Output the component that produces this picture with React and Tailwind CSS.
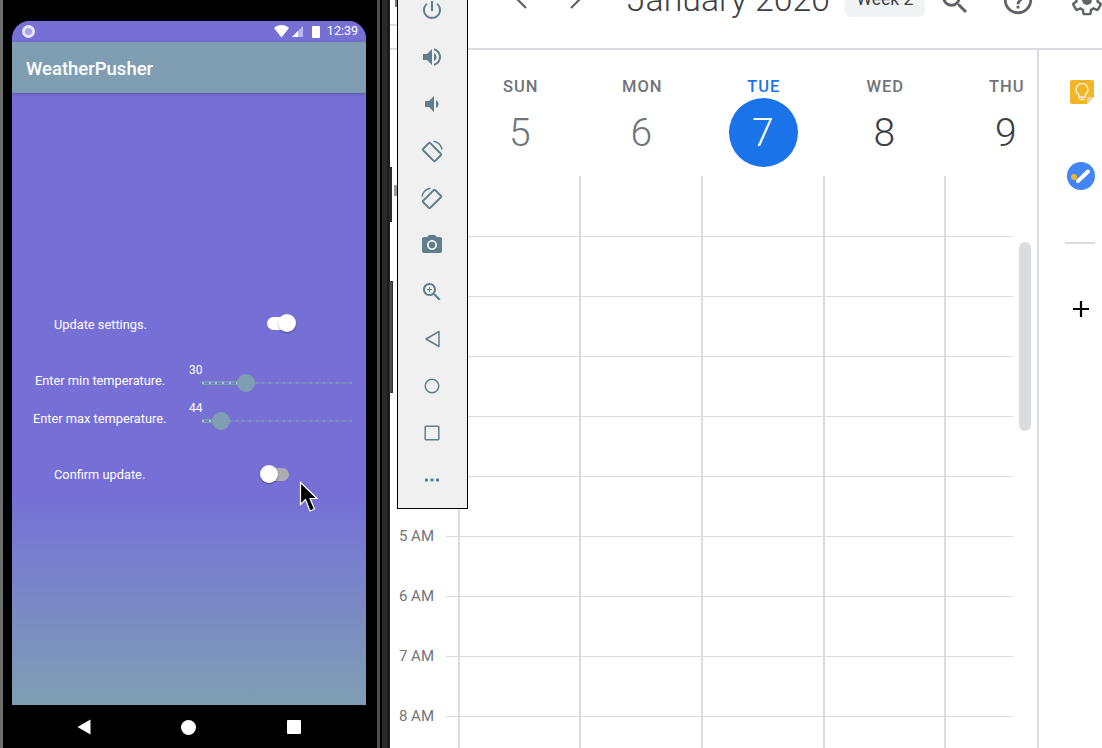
import React from "react";

const toolColor = "#607d8b";

const ToolIcon = ({ children, className = "" }) => (
  <div className="h-[47.1px] flex items-center justify-center shrink-0 pr-[1px]">
    <svg width="24" height="24" viewBox="0 0 24 24" fill={toolColor} className={className}>
      {children}
    </svg>
  </div>
);

const RotateShape = () => (
  <>
    <rect x="3.5" y="8" width="17" height="10" rx="1" transform="rotate(45 12 13)" fill="none" stroke={toolColor} strokeWidth="2" />
    <path d="M13.5 2.2A10.5 10.5 0 0 1 22 10.5" fill="none" stroke={toolColor} strokeWidth="1.5" />
  </>
);

const EmulatorToolbar = () => (
  <div className="absolute left-[397px] top-[-15px] w-[71px] h-[524px] bg-[#f0f0f0] border border-black flex flex-col">
    <ToolIcon>
      <path d="M13 3h-2v10h2V3zm4.83 2.17l-1.42 1.42C17.99 7.86 19 9.81 19 12c0 3.87-3.13 7-7 7s-7-3.13-7-7c0-2.19 1.01-4.14 2.58-5.42L6.17 5.17C4.23 6.82 3 9.26 3 12c0 4.97 4.03 9 9 9s9-4.03 9-9c0-2.74-1.23-5.18-3.17-6.83z" />
    </ToolIcon>
    <ToolIcon>
      <path d="M3 9v6h4l5 5V4L7 9H3zm13.5 3c0-1.77-1.02-3.29-2.5-4.03v8.05c1.48-.73 2.5-2.25 2.5-4.02zM14 3.23v2.06c2.89.86 5 3.54 5 6.71s-2.11 5.85-5 6.71v2.06c4.01-.91 7-4.49 7-8.77s-2.99-7.86-7-8.77z" />
    </ToolIcon>
    <ToolIcon>
      <path d="M18.5 12c0-1.77-1.02-3.29-2.5-4.03v8.05c1.48-.73 2.5-2.25 2.5-4.02zM5 9v6h4l5 5V4L9 9H5z" />
    </ToolIcon>
    <ToolIcon>
      <RotateShape />
    </ToolIcon>
    <ToolIcon className="-scale-x-100">
      <RotateShape />
    </ToolIcon>
    <ToolIcon>
      <circle cx="12" cy="12" r="3.2" />
      <path d="M9 2L7.17 4H4c-1.1 0-2 .9-2 2v12c0 1.1.9 2 2 2h16c1.1 0 2-.9 2-2V6c0-1.1-.9-2-2-2h-3.17L15 2H9zm3 15c-2.76 0-5-2.24-5-5s2.24-5 5-5 5 2.24 5 5-2.24 5-5 5z" />
    </ToolIcon>
    <ToolIcon>
      <path d="M15.5 14h-.79l-.28-.27C15.41 12.59 16 11.11 16 9.5 16 5.91 13.09 3 9.5 3S3 5.91 3 9.5 5.91 16 9.5 16c1.61 0 3.09-.59 4.23-1.57l.27.28v.79l5 4.99L20.49 19l-4.99-5zm-6 0C7.01 14 5 11.99 5 9.5S7.01 5 9.5 5 14 7.01 14 9.5 11.99 14 9.5 14z" />
      <path d="M12 10h-2v2H9v-2H7V9h2V7h1v2h2v1z" />
    </ToolIcon>
    <ToolIcon>
      <path d="M19 4.5v15L6 12z" fill="none" stroke={toolColor} strokeWidth="1.5" strokeLinejoin="round" />
    </ToolIcon>
    <ToolIcon>
      <circle cx="12" cy="12" r="6.8" fill="none" stroke={toolColor} strokeWidth="1.5" />
    </ToolIcon>
    <ToolIcon>
      <rect x="5.2" y="5.2" width="13.6" height="13.6" rx="0.8" fill="none" stroke={toolColor} strokeWidth="1.5" />
    </ToolIcon>
    <ToolIcon>
      <circle cx="6.5" cy="12" r="1.7" />
      <circle cx="12" cy="12" r="1.7" />
      <circle cx="17.5" cy="12" r="1.7" />
    </ToolIcon>
  </div>
);

const Switch = ({ on, className = "" }) => (
  <div className={`relative h-[13px] rounded-full ${on ? "w-[24px] bg-white" : "w-[22px] bg-[#adadb0]"} ${className}`}>
    <div
      className={`absolute top-[-3px] w-[18px] h-[18px] rounded-full bg-white shadow-[0_1px_2px_rgba(0,0,0,0.35)] ${
        on ? "right-[-5px]" : "left-[-7px]"
      }`}
    />
  </div>
);

const Slider = ({ value, thumbLeft }) => (
  <div className="relative w-[150px] h-[18px] flex items-center">
    <div
      className="absolute left-0 top-[7px] h-[4px] bg-[#74a0ab]"
      style={{ width: thumbLeft }}
    />
    <div className="relative w-full h-[2px] bg-[#7a7fcb] flex justify-between items-center">
      {Array.from({ length: 23 }).map((_, i) => (
        <span
          key={i}
          className={`w-[2px] h-[2px] ${i * 6.8 < thumbLeft ? "bg-[#a9c8c4]" : "bg-[#8093bb]"}`}
        />
      ))}
    </div>
    <div
      className="absolute top-0 w-[18px] h-[18px] rounded-full bg-[#7f9eb2]"
      style={{ left: thumbLeft - 9 }}
    />
    <span className="absolute left-[-13px] top-[-12px] text-[12px] leading-[16px] text-white">{value}</span>
  </div>
);

const Phone = () => (
  <div className="relative w-[377px] h-full shrink-0 bg-black border-l-[3px] border-[#6d6d6d] pl-[9px] pr-[11px] flex flex-col">
    <div className="h-[21px] shrink-0" />
    <div className="h-[684px] flex flex-col rounded-t-[18px] overflow-hidden bg-gradient-to-b from-[#7670d6] from-[70%] to-[#7f9eb2]">
      <div className="h-[21px] shrink-0 bg-[#7670d6] flex items-center justify-between pl-[10px] pr-[8px]">
        <div className="w-[13px] h-[13px] rounded-full border-[3px] border-[#e8e6f8] bg-[#a7a3e6]" />
        <div className="flex items-center text-white">
          <svg width="30" height="13" viewBox="0 0 30 13" className="mr-[8px]">
            <path d="M0 3 C4 -1 11 -1 15 3 L7.5 12.5z" fill="#fff" />
            <path d="M18 12 L29 1 V12z" fill="#fff" fillOpacity="0.5" />
            <path d="M24 6 L24 12 H18z" fill="#fff" />
          </svg>
          <div className="w-[8px] h-[12px] bg-white rounded-[1px] mr-[7px]" />
          <span className="text-[12.5px] leading-none">12:39</span>
        </div>
      </div>
      <div className="h-[51px] shrink-0 bg-[#7f9eb2] flex items-center pl-[14px] pt-[4px] shadow-[0_1px_3px_rgba(60,50,120,0.5)] text-white text-[18.5px] font-medium">
        WeatherPusher
      </div>

      <div className="h-[222px] shrink-0" />
      <div className="h-[18px] flex items-center text-white text-[12.8px]">
        <span className="ml-[42px] w-[213px] mt-[2px] whitespace-nowrap">Update settings.</span>
        <Switch on className="mb-[1px]" />
      </div>
      <div className="h-[41px] shrink-0" />
      <div className="h-[18px] flex items-center text-white text-[12.8px]">
        <span className="ml-[23px] w-[167px] mb-[4px] whitespace-nowrap">Enter min temperature.</span>
        <Slider value="30" thumbLeft={44} />
      </div>
      <div className="h-[20px] shrink-0" />
      <div className="h-[18px] flex items-center text-white text-[12.8px]">
        <span className="ml-[21px] w-[169px] mb-[4px] whitespace-nowrap">Enter max temperature.</span>
        <Slider value="44" thumbLeft={19} />
      </div>
      <div className="h-[36px] shrink-0" />
      <div className="h-[18px] flex items-center text-white text-[12.8px]">
        <span className="ml-[42px] w-[213px] whitespace-nowrap">Confirm update.</span>
        <Switch className="mb-[2px]" />
      </div>
    </div>
    <div className="flex-1 flex items-center justify-between px-[65px] pt-[1px]">
      <svg width="14" height="16" viewBox="0 0 14 16">
        <path d="M0.5 8 L13.5 0.5 V15.5z" fill="#fff" />
      </svg>
      <div className="w-[15px] h-[15px] rounded-full bg-white mr-[2px]" />
      <div className="w-[14px] h-[14px] rounded-[1px] bg-white" />
    </div>
  </div>
);

const PhoneFrame = () => (
  <div className="relative w-[13px] h-full shrink-0 bg-[#2a2a2a] border-l-[3px] border-r-[3px] border-l-[#505050] border-r-[#1c1c1c]">
    <div className="absolute left-0 top-0 w-[2px] h-full bg-black" />
    <div className="absolute left-[9px] top-[167px] w-[3px] h-[55px] bg-[#2b2b2b]" />
    <div className="absolute left-[9px] top-[281px] w-[4px] h-[112px] bg-[#4d4d4d] border border-[#333]" />
  </div>
);

const days = [
  { name: "SUN", num: "5", past: true },
  { name: "MON", num: "6", past: true },
  { name: "TUE", num: "7", today: true },
  { name: "WED", num: "8" },
  { name: "THU", num: "9" },
];

const widths = ["w-[121px]", "w-[122px]", "w-[122px]", "w-[121px]"];

const rows = ["", "", "", "", "", "", "5 AM", "6 AM", "7 AM", "8 AM"];

const CalendarHeader = () => (
  <div className="h-[50px] shrink-0 border-b-2 border-[#dadce0] relative overflow-hidden">
    {/* bits of the page showing left of the emulator toolbar */}
    <div className="absolute left-0 top-[24px] w-[8px] h-[2px] bg-[#e0e0e0]" />
    <div className="absolute left-[5px] top-0 w-[2px] h-[7px] bg-[#777]" />
    <div className="-mt-[20px] h-[40px] flex items-center text-[#3c4043]">
      <svg width="24" height="24" viewBox="0 0 24 24" fill="none" stroke="#5f6368" strokeWidth="2.2" className="ml-[121px] shrink-0">
        <path d="M15 4l-8 8 8 8" />
      </svg>
      <svg width="24" height="24" viewBox="0 0 24 24" fill="none" stroke="#5f6368" strokeWidth="2.2" className="ml-[27px] shrink-0">
        <path d="M9 4l8 8-8 8" />
      </svg>
      <span className="ml-[41px] mt-[1px] text-[33.8px] font-light whitespace-nowrap">January 2020</span>
      <span className="ml-[15px] w-[80px] h-[32px] mt-[2px] pb-[3px] shrink-0 rounded-[6px] bg-[#f1f3f4] text-[17.5px] flex items-center justify-center">
        Week 2
      </span>
      <svg width="34" height="34" viewBox="0 0 24 24" fill="#5f6368" className="ml-[13px] mt-[2px] shrink-0">
        <path d="M15.5 14h-.79l-.28-.27C15.41 12.59 16 11.11 16 9.5 16 5.91 13.09 3 9.5 3S3 5.91 3 9.5 5.91 16 9.5 16c1.61 0 3.09-.59 4.23-1.57l.27.28v.79l5 4.99L20.49 19l-4.99-5zm-6 0C7.01 14 5 11.99 5 9.5S7.01 5 9.5 5 14 7.01 14 9.5 11.99 14 9.5 14z" />
      </svg>
      <svg width="34" height="34" viewBox="0 0 24 24" fill="#5f6368" className="ml-[29px] shrink-0">
        <path d="M11 18h2v-2h-2v2zm1-16C6.48 2 2 6.48 2 12s4.48 10 10 10 10-4.48 10-10S17.52 2 12 2zm0 18c-4.41 0-8-3.59-8-8s3.59-8 8-8 8 3.59 8 8-3.59 8-8 8zm0-14c-2.21 0-4 1.79-4 4h2c0-1.1.9-2 2-2s2 .9 2 2c0 2-3 1.75-3 5h2c0-2.25 3-2.5 3-5 0-2.21-1.79-4-4-4z" />
      </svg>
      <svg width="34" height="34" viewBox="0 0 24 24" fill="none" stroke="#5f6368" strokeWidth="1.7" className="ml-[35px] shrink-0">
        <path d="M19.43 12.98c.04-.32.07-.64.07-.98s-.03-.66-.07-.98l2.11-1.65c.19-.15.24-.42.12-.64l-2-3.46c-.12-.22-.39-.3-.61-.22l-2.49 1c-.52-.4-1.08-.73-1.69-.98l-.38-2.65C14.46 2.18 14.25 2 14 2h-4c-.25 0-.46.18-.49.42l-.38 2.65c-.61.25-1.17.59-1.69.98l-2.49-1c-.23-.09-.49 0-.61.22l-2 3.46c-.13.22-.07.49.12.64l2.11 1.65c-.04.32-.07.65-.07.98s.03.66.07.98l-2.11 1.65c-.19.15-.24.42-.12.64l2 3.46c.12.22.39.3.61.22l2.49-1c.52.4 1.08.73 1.69.98l.38 2.65c.03.24.24.42.49.42h4c.25 0 .46-.18.49-.42l.38-2.65c.61-.25 1.17-.59 1.69-.98l2.49 1c.23.09.49 0 .61-.22l2-3.46c.12-.22.07-.49-.12-.64l-2.11-1.65z" />
        <circle cx="12" cy="12" r="3.5" fill="#5f6368" stroke="none" />
      </svg>
    </div>
  </div>
);

const SidePanel = () => (
  <div className="flex-1 border-l-2 border-[#dadce0] flex flex-col items-start">
    <svg width="24" height="24" viewBox="0 0 24 24" className="mt-[30px] ml-[31px] shrink-0">
      <path d="M2 0h20a2 2 0 0 1 2 2v15l-7 7H2a2 2 0 0 1-2-2V2a2 2 0 0 1 2-2z" fill="#f0b625" />
      <path d="M24 17l-7 7v-5a2 2 0 0 1 2-2z" fill="#e8d9a8" />
      <path d="M12 3.5a6 6 0 0 0-3.2 11v2.6h6.4v-2.6A6 6 0 0 0 12 3.5z" fill="none" stroke="#fff" strokeWidth="1.2" />
      <path d="M9.5 19.5h5" stroke="#fff" strokeWidth="1.2" />
    </svg>
    <div className="mt-[58px] ml-[28px] w-[28px] h-[28px] rounded-full bg-[#4285f4] relative shrink-0">
      <span className="absolute left-[4px] top-[12px] w-[6px] h-[6px] rounded-full bg-[#f0b625]" />
      <svg width="28" height="28" viewBox="0 0 28 28" className="absolute left-0 top-0">
        <path d="M11 19L21 9.5" stroke="#fff" strokeWidth="4" strokeLinecap="round" />
      </svg>
    </div>
    <div className="mt-[52px] ml-[26px] w-[30px] h-[2px] bg-[#dadce0] shrink-0" />
    <svg width="20" height="20" viewBox="0 0 20 20" className="mt-[55px] ml-[32px] shrink-0">
      <path d="M10 2v16M2 10h16" stroke="#000" strokeWidth="2.2" />
    </svg>
  </div>
);

const Calendar = () => (
  <div className="flex-1 min-w-0 h-full flex flex-col bg-white">
    <CalendarHeader />
    <div className="flex-1 min-h-0 flex">
      <div className="w-[647px] shrink-0 flex flex-col">
        <div className="h-[126px] shrink-0 flex pl-[70px]">
          {days.map((d) => (
            <div key={d.name} className="w-[121.5px] shrink-0 flex flex-col items-center pt-[27px]">
              <span className={`text-[16.5px] leading-[20px] font-medium tracking-[1px] ${d.today ? "text-[#1a73e8]" : "text-[#70757a]"}`}>
                {d.name}
              </span>
              <span
                className={`w-[69px] h-[69px] mt-[1px] shrink-0 rounded-full flex items-center justify-center pr-[2px] pt-[1px] text-[39px] font-light ${
                  d.today ? "bg-[#1a73e8] text-white" : d.past ? "text-[#70757a]" : "text-[#3c4043]"
                }`}
              >
                {d.num}
              </span>
            </div>
          ))}
        </div>
        <div className="flex-1 overflow-hidden">
          {rows.map((label, i) => (
            <div key={i} className="h-[60px] flex">
              <div className="w-[56px] shrink-0 relative">
                {label && (
                  <span className="absolute right-[12px] top-[-9px] text-[15px] leading-[18px] text-[#70757a] whitespace-nowrap">
                    {label}
                  </span>
                )}
              </div>
              <div className={`w-[567px] shrink-0 flex pl-[12px] ${i > 0 ? "border-t border-[#dadce0]" : ""}`}>
                {widths.map((w, j) => (
                  <div key={j} className={`${w} h-full border-l-2 border-[#dadce0]`} />
                ))}
                <div className="flex-1 border-l-2 border-[#dadce0]" />
              </div>
            </div>
          ))}
        </div>
      </div>
      <SidePanel />
    </div>
  </div>
);

export default function App() {
  return (
    <div className="relative w-[1102px] h-[748px] overflow-hidden flex bg-white font-['Roboto',sans-serif]">
      <Phone />
      <PhoneFrame />
      <Calendar />
      <EmulatorToolbar />
      {/* sliver of a calendar label left of the toolbar */}
      <div className="absolute left-[394px] top-[185px] w-[3px] h-[11px] bg-[#999]" />
      {/* scrollbar in the calendar */}
      <div className="absolute left-[1019px] top-[242px] w-[12px] h-[189px] rounded-full bg-[#dadce0]" />
      {/* mouse pointer */}
      <svg width="20" height="32" viewBox="0 0 20 32" className="absolute left-[299px] top-[481px]">
        <path d="M1.5 1.5V23.5L6.5 18.5L11 30L15.5 28L11 17.5H18z" fill="#000" stroke="#fff" strokeWidth="1.2" />
      </svg>
    </div>
  );
}
